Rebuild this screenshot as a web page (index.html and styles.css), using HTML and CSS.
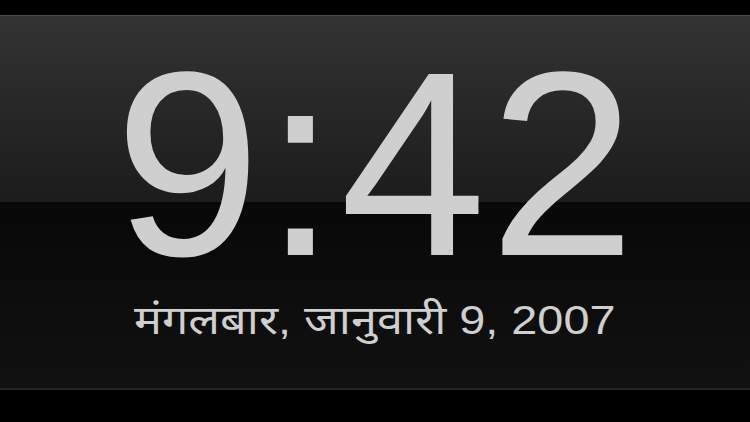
FILE: index.html
```html
<!DOCTYPE html>
<html>
<head>
<meta charset="utf-8">
<link rel="stylesheet" href="styles.css">
</head>
<body>
<div class="screen">
  <div class="panel">
    <div class="time">9:42</div>
    <div class="date">मंगलबार, जानुवारी 9, 2007</div>
  </div>
</div>
</body>
</html>
```
FILE: styles.css
```css
html, body {
  margin: 0;
  padding: 0;
  background: #000;
  width: 750px;
  height: 422px;
  overflow: hidden;
}
.screen {
  padding-top: 15px;
  height: 422px;
  box-sizing: border-box;
}
.panel {
  height: 375px;
  box-sizing: border-box;
  border-top: 1px solid #4a4a4a;
  border-bottom: 2px solid #242424;
  background: linear-gradient(to bottom, #333333 0px, #1c1c1c 186px, #080808 186px, #111111 100%);
  display: flex;
  flex-direction: column;
  align-items: center;
  color: #cfcfcf;
  font-family: "Liberation Sans", Arial, "Noto Sans", sans-serif;
}
.time {
  font-size: 263px;
  line-height: 0.8;
  margin-top: 43px;
  letter-spacing: 3px;
  padding-left: 3px;
}
.date {
  font-size: 40px;
  line-height: 1;
  margin-top: 31px;
  transform: scaleX(1.17);
  font-family: "Liberation Sans", "Noto Sans", "Noto Sans Devanagari", sans-serif;
}
```
